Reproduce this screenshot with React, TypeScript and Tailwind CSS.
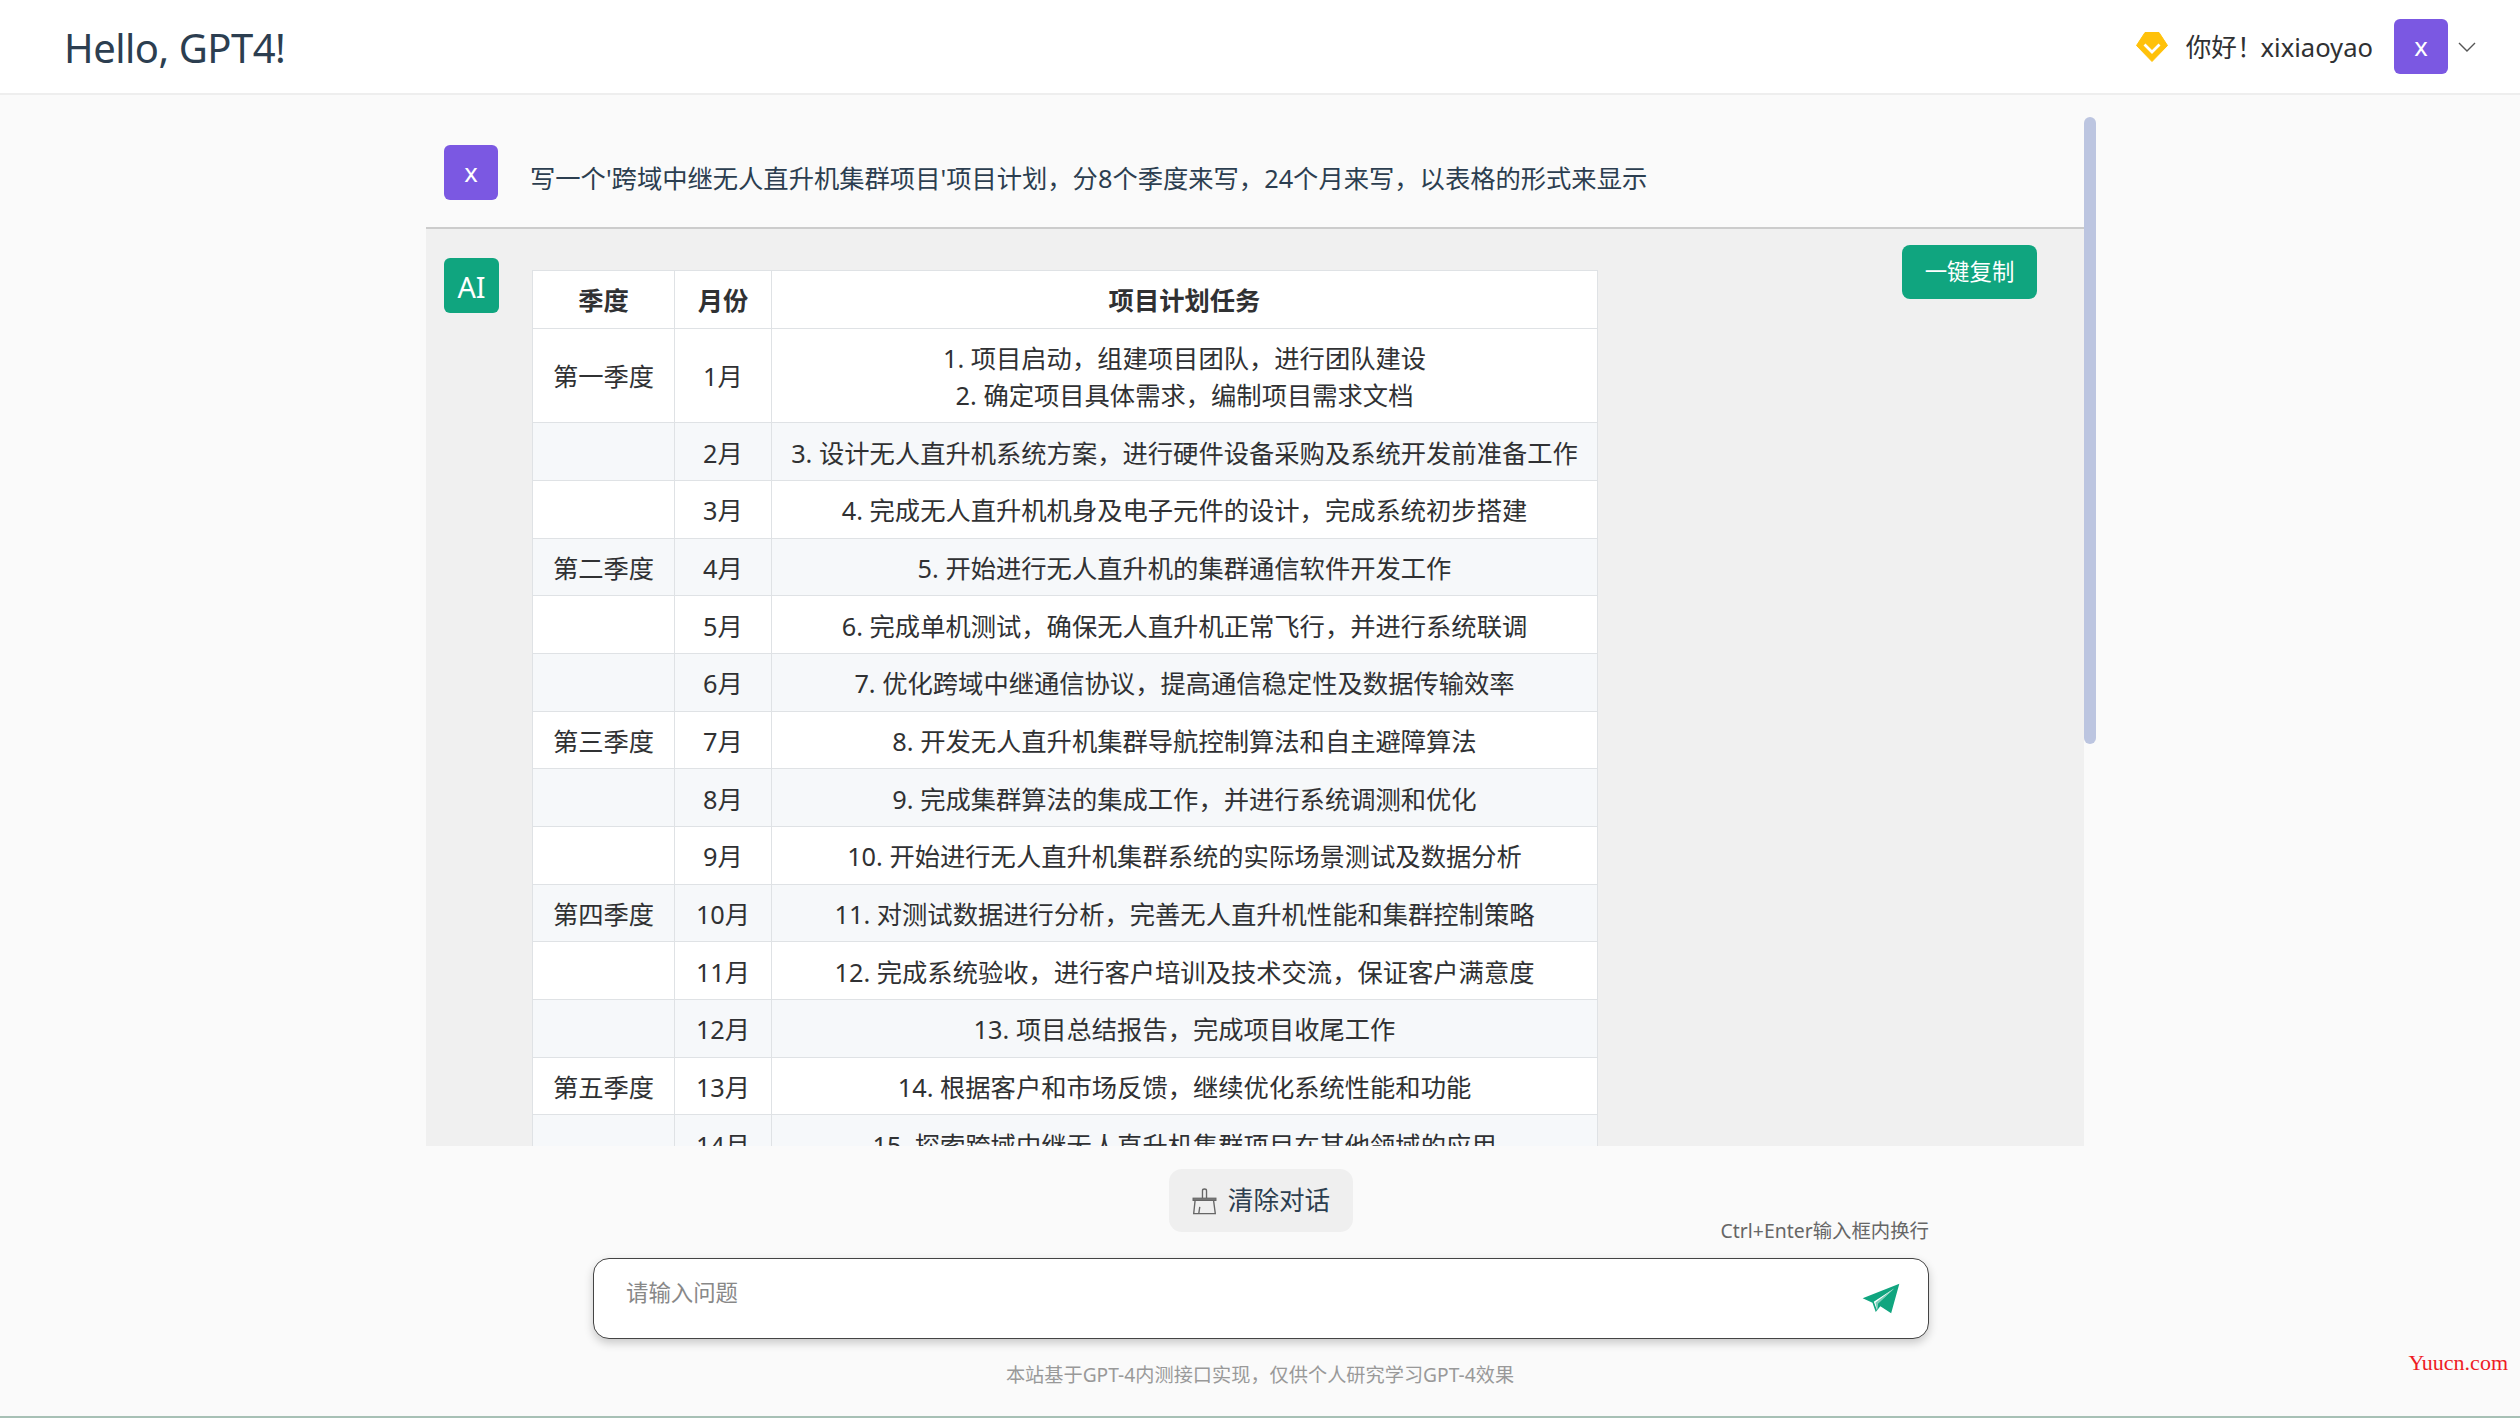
const rows: [string, string, string][] = [
  ["", "2月", "3. 设计无人直升机系统方案，进行硬件设备采购及系统开发前准备工作"],
  ["", "3月", "4. 完成无人直升机机身及电子元件的设计，完成系统初步搭建"],
  ["第二季度", "4月", "5. 开始进行无人直升机的集群通信软件开发工作"],
  ["", "5月", "6. 完成单机测试，确保无人直升机正常飞行，并进行系统联调"],
  ["", "6月", "7. 优化跨域中继通信协议，提高通信稳定性及数据传输效率"],
  ["第三季度", "7月", "8. 开发无人直升机集群导航控制算法和自主避障算法"],
  ["", "8月", "9. 完成集群算法的集成工作，并进行系统调测和优化"],
  ["", "9月", "10. 开始进行无人直升机集群系统的实际场景测试及数据分析"],
  ["第四季度", "10月", "11. 对测试数据进行分析，完善无人直升机性能和集群控制策略"],
  ["", "11月", "12. 完成系统验收，进行客户培训及技术交流，保证客户满意度"],
  ["", "12月", "13. 项目总结报告，完成项目收尾工作"],
  ["第五季度", "13月", "14. 根据客户和市场反馈，继续优化系统性能和功能"],
  ["", "14月", "15. 探索跨域中继无人直升机集群项目在其他领域的应用"],
];

const font = "font-['Noto_Sans','Noto_Sans_CJK_SC',sans-serif]";
const cell = "border-[1.6px] border-[#dfe2e5] pt-[11.4px] pb-[8.5px] text-center leading-[36.8px]";

function Avatar({ label, green }: { label: string; green?: boolean }) {
  return (
    <div
      className={`flex h-[55px] w-[54px] shrink-0 items-center justify-center rounded-[6px] pt-[2px] text-white ${
        green ? "w-[55px] bg-[#10a57f] text-[28.8px]" : "bg-[#7b58e2] text-[25.6px]"
      }`}
    >
      {label}
    </div>
  );
}

function GemIcon() {
  return (
    <svg viewBox="0 0 32 30" className="h-[30px] w-[32px]" aria-hidden="true">
      <path d="M9 0.5H23L31.5 13.5L16 29.5L0.5 13.5Z" fill="#ffc10a" stroke="#ffc10a" strokeLinejoin="round" />
      <path d="M8.5 12.5L16 20L23.5 12.5" fill="none" stroke="#fff" strokeWidth="2.8" />
    </svg>
  );
}

function BroomIcon() {
  return (
    <svg viewBox="38 38 74 80" className="h-[27px] w-[25px]" fill="none" stroke="#666" aria-hidden="true">
      <path d="M69 68V46Q69 41 75 41Q81 41 81 46V68" strokeWidth="4" />
      <rect x="41" y="68" width="68" height="7" fill="#777" strokeWidth="3" />
      <path d="M47 76L43 114H107L102 76M61 94L58 114" strokeWidth="4" />
    </svg>
  );
}

function SendIcon() {
  return (
    <svg viewBox="36 36 116 94" className="h-[31px] w-[38px]" aria-hidden="true">
      <path d="M150 38L38 82L68 96L78 124L92 107L125 128Z" fill="#10a57f" />
      <path d="M135 52L72 93L82 120L85 98Z" fill="#fff" />
      <path d="M135 52L85 98L82 120L77 95Z" fill="#10a57f" opacity="0.55" />
    </svg>
  );
}

export default function App() {
  return (
    <div className={`relative flex h-screen flex-col overflow-hidden bg-[#fafafa] text-[#303133] ${font}`}>
      <header className="flex h-[95px] shrink-0 items-center justify-between border-b-[2px] border-[#eeeeee] bg-white pr-[44px] pl-[64px]">
        <h1 className="pt-[3px] text-[40px] font-normal tracking-[-0.5px] text-[#2c3e50]">Hello, GPT4!</h1>
        <div className="flex items-center">
          <GemIcon />
          <span className="ml-[18px] pt-[3px] text-[25.6px]">你好！</span>
          <span className="-ml-[2px] pt-[3px] text-[25.6px]">xixiaoyao</span>
          <div className="ml-[21px]">
            <Avatar label="x" />
          </div>
          <svg viewBox="0 0 18 10" className="ml-[10px] h-[10px] w-[18px]" fill="none" stroke="#555" strokeWidth="1.4" aria-hidden="true">
            <path d="M1 1L9 9L17 1" />
          </svg>
        </div>
      </header>

      <main className="flex min-h-0 flex-1 flex-col">
        <div className="mt-[22px] ml-[426px] flex h-[1029px] w-[1670px] shrink-0">
          <div className="min-w-0 flex-1 overflow-hidden">
            <div className="flex h-[112px] items-start border-b-[2px] border-[#cccccc] pt-[28px] pl-[18px]">
              <Avatar label="x" />
              <p className="mt-[14px] ml-[32px] text-[25.3px] leading-[38px] text-[#2c3e50]">
                写一个'跨域中继无人直升机集群项目'项目计划，分8个季度来写，24个月来写，以表格的形式来显示
              </p>
            </div>
            <div className="relative flex h-[917px] items-start bg-[#f0f0f0] pt-[29px] pl-[18px]">
              <Avatar label="AI" green />
              <table className="mt-[12px] ml-[33px] w-[1066px] table-fixed border-collapse bg-white text-[25.3px]">
                <colgroup>
                  <col className="w-[142px]" />
                  <col className="w-[97px]" />
                  <col />
                </colgroup>
                <thead>
                  <tr>
                    <th className={`${cell} font-bold`}>季度</th>
                    <th className={`${cell} font-bold`}>月份</th>
                    <th className={`${cell} font-bold`}>项目计划任务</th>
                  </tr>
                </thead>
                <tbody>
                  <tr>
                    <td className={cell}>第一季度</td>
                    <td className={cell}>1月</td>
                    <td className={cell}>
                      1. 项目启动，组建项目团队，进行团队建设
                      <br />
                      2. 确定项目具体需求，编制项目需求文档
                    </td>
                  </tr>
                  {rows.map(([quarter, month, task], i) => (
                    <tr key={month} className={i % 2 === 0 ? "bg-[#f6f8fa]" : "bg-white"}>
                      <td className={cell}>{quarter}</td>
                      <td className={cell}>{month}</td>
                      <td className={cell}>{task}</td>
                    </tr>
                  ))}
                </tbody>
              </table>
              <button className="absolute top-[16px] right-[47px] h-[54px] w-[135px] rounded-[8px] bg-[#10a57f] text-[22.4px] text-white">
                一键复制
              </button>
            </div>
          </div>
          <div className="w-[12px] shrink-0">
            <div className="h-[627px] rounded-full bg-[#bcc5e0]" />
          </div>
        </div>

        <div className="mt-[23px] ml-[1169px] flex h-[63px] w-[184px] shrink-0 items-center justify-center gap-[11px] rounded-[13px] bg-[#efefef] pt-[2px] text-[25.6px] text-[#2c3e50]">
          <BroomIcon />
          <span>清除对话</span>
        </div>

        <div className="-mt-[14px] ml-[593px] h-[40px] w-[1336px] shrink-0 text-right text-[19.4px] leading-[26px] text-[#666]">
          Ctrl+Enter输入框内换行
        </div>

        <div className="ml-[593px] flex h-[81px] w-[1336px] shrink-0 items-center justify-between rounded-[16px] border-[1.6px] border-[#444] bg-white pr-[28px] pl-[32px] shadow-[0_4px_10px_rgba(0,0,0,0.2)]">
          <span className="mb-[12px] text-[22.4px] text-[#888]">请输入问题</span>
          <SendIcon />
        </div>

        <p className="mt-[22px] text-center text-[19.2px] leading-[28px] text-[#999]">
          本站基于GPT-4内测接口实现，仅供个人研究学习GPT-4效果
        </p>
      </main>

      <div className="h-[2px] shrink-0 bg-[#a7c0b5]" />
      <span className="absolute right-[12px] bottom-[39px] font-['Liberation_Serif',serif] text-[22px] text-[#ee1c25]">
        Yuucn.com
      </span>
    </div>
  );
}
